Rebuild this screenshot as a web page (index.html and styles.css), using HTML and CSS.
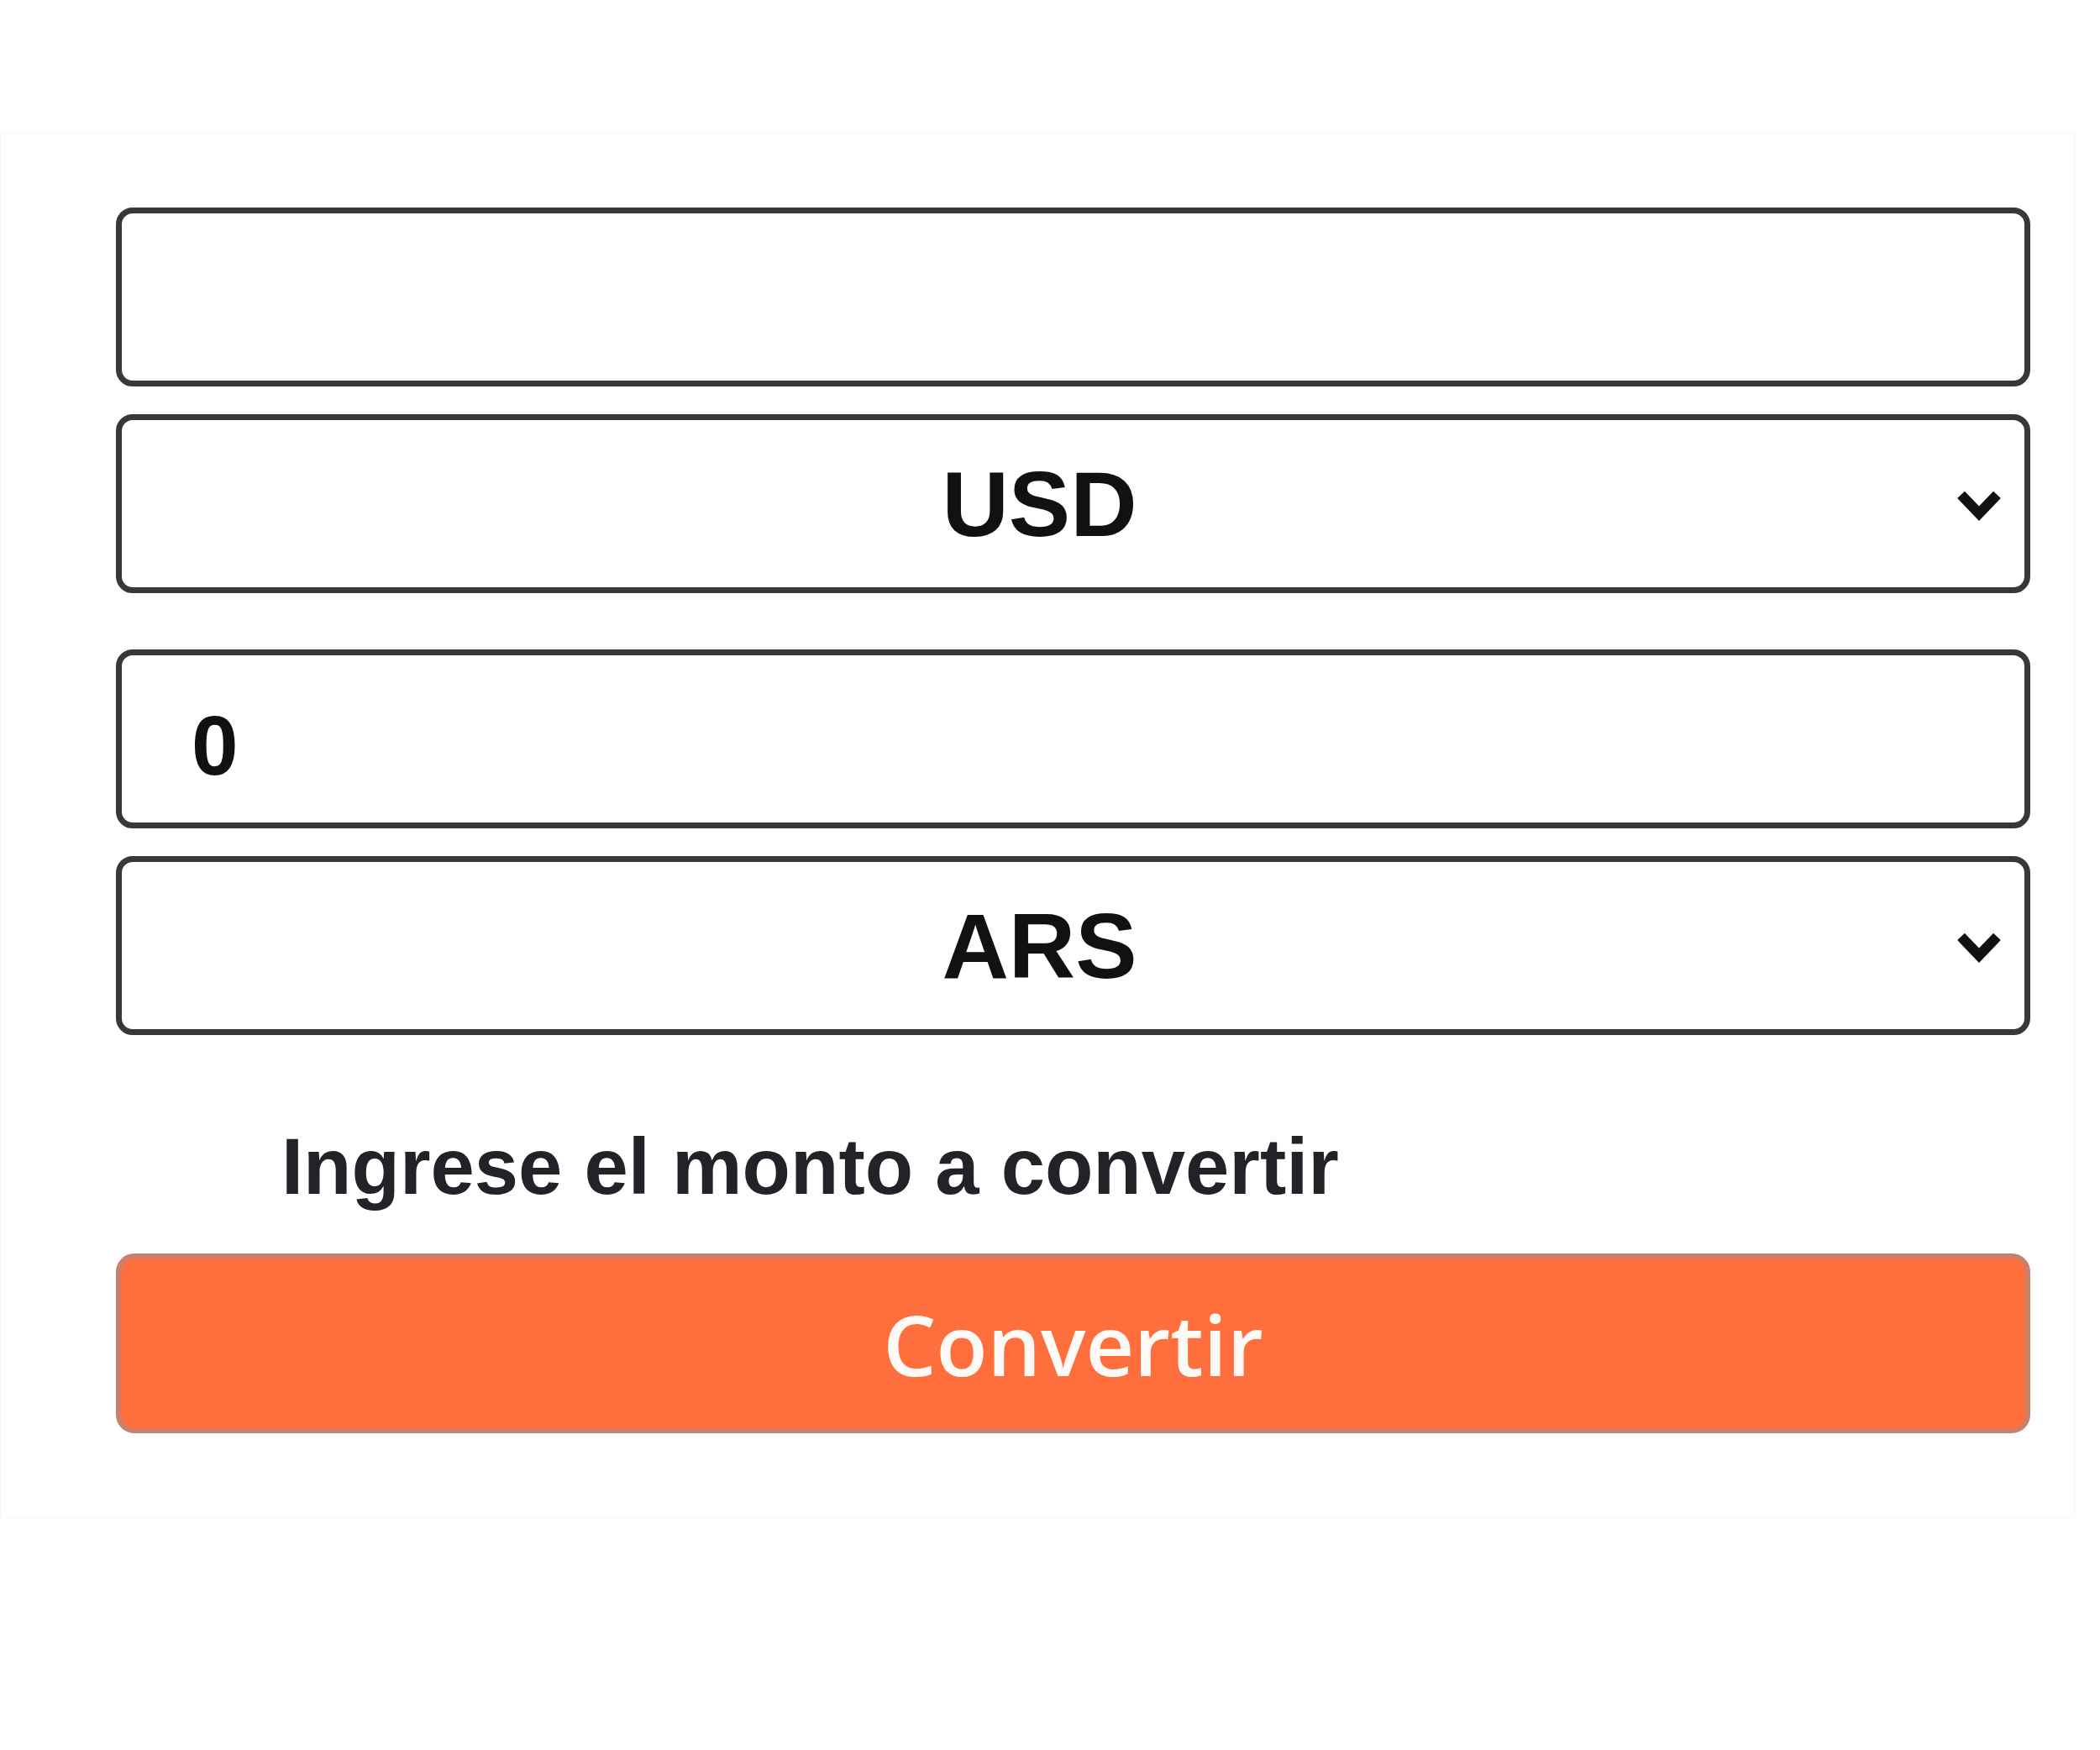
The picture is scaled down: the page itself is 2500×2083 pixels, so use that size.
FILE: index.html
```html
<!DOCTYPE html>
<html lang="es">
<head>
<meta charset="utf-8">
<title>Conversor</title>
<link rel="stylesheet" href="styles.css">
</head>
<body>
<div class="card">
  <form class="form">
    <input class="field" type="text" value="">
    <div class="select-wrap gap-small">
      <select class="field select"><option>USD</option></select>
      <svg class="chev" viewBox="0 0 60 40" width="56" height="38"><polyline points="7,7 30,31 53,7" fill="none" stroke="#111" stroke-width="13" stroke-linejoin="miter"/></svg>
    </div>
    <input class="field amount gap-large" type="text" value="0">
    <div class="select-wrap gap-small">
      <select class="field select"><option>ARS</option></select>
      <svg class="chev" viewBox="0 0 60 40" width="56" height="38"><polyline points="7,7 30,31 53,7" fill="none" stroke="#111" stroke-width="13" stroke-linejoin="miter"/></svg>
    </div>
    <p class="hint">Ingrese el monto a convertir</p>
    <button class="btn" type="button">Convertir</button>
  </form>
</div>
</body>
</html>
```
FILE: styles.css
```css
* { box-sizing: border-box; }
html, body { margin: 0; padding: 0; background: #ffffff; }
body { font-family: "Liberation Sans", Arial, sans-serif; }

.card {
  margin-top: 158px;
  width: 2470px;
  border: 1px solid #f6f6f6;
  padding: 88px 52px 100px 137px;
}

.form {
  display: flex;
  flex-direction: column;
  margin: 0;
}

.field {
  display: block;
  width: 100%;
  height: 213px;
  border: 7px solid #383838;
  border-radius: 20px;
  background: #ffffff;
  font-family: "Liberation Sans", Arial, sans-serif;
  font-weight: 700;
  color: #111111;
  outline: none;
  margin: 0;
}

.gap-small { margin-top: 33px; }
.gap-large { margin-top: 67px; }

.select-wrap { position: relative; }

.select {
  -webkit-appearance: none;
  appearance: none;
  font-size: 110px;
  text-align: center;
  text-align-last: center;
  padding: 0 80px 0 0;
}

.chev {
  position: absolute;
  right: 33px;
  top: 89px;
  pointer-events: none;
}

.amount {
  font-size: 100px;
  padding: 16px 0 0 83px;
}

.hint {
  margin: 103px 0 0 0;
  padding-left: 197px;
  font-size: 94px;
  font-weight: 700;
  line-height: 107px;
  color: #222228;
}

.btn {
  margin-top: 50px;
  height: 214px;
  width: 100%;
  border: 6px solid #c9806b;
  border-radius: 22px;
  background: #ff6f3e;
  color: #fffaf5;
  font-family: "Open Sans", "Liberation Sans", sans-serif;
  font-weight: 600;
  font-size: 100px;
  padding: 0;
  cursor: pointer;
}
```
